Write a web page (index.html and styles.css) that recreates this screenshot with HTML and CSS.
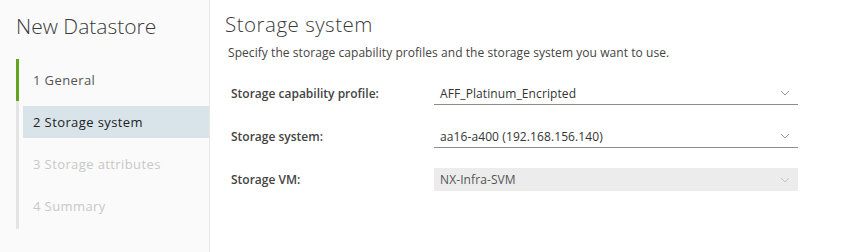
FILE: index.html
```html
<!DOCTYPE html>
<html lang="en">
<head>
  <meta charset="UTF-8" />
  <title>New Datastore</title>
  <link rel="stylesheet" href="styles.css">
</head>
<body>
  <div class="wizard">
    <div class="sidebar">
      <h1>New Datastore</h1>
      <div class="steps">
        <div class="step done">1 General</div>
        <div class="step current">2 Storage system</div>
        <div class="step">3 Storage attributes</div>
        <div class="step">4 Summary</div>
      </div>
    </div>

    <div class="content">
      <h2>Storage system</h2>
      <p class="desc">Specify the storage capability profiles and the storage system you want to use.</p>

      <div class="form">
        <div class="row">
          <label>Storage capability profile:</label>
          <div class="select">
            <span>AFF_Platinum_Encripted</span>
            <svg class="chev" width="10" height="6" viewBox="0 0 10 6"><path d="M1 1 L5 5 L9 1" fill="none" stroke="#9a9a9a" stroke-width="1"/></svg>
          </div>
        </div>
        <div class="row">
          <label>Storage system:</label>
          <div class="select">
            <span>aa16-a400 (192.168.156.140)</span>
            <svg class="chev" width="10" height="6" viewBox="0 0 10 6"><path d="M1 1 L5 5 L9 1" fill="none" stroke="#9a9a9a" stroke-width="1"/></svg>
          </div>
        </div>
        <div class="row">
          <label>Storage VM:</label>
          <div class="select disabled">
            <span>NX-Infra-SVM</span>
            <svg class="chev" width="10" height="6" viewBox="0 0 10 6"><path d="M1 1 L5 5 L9 1" fill="none" stroke="#c4c4c4" stroke-width="1"/></svg>
          </div>
        </div>
      </div>
    </div>
  </div>
</body>
</html>
```

FILE: styles.css
```css
body {
  margin: 0;
  font-family: "Open Sans", sans-serif;
  color: #333;
  background: #fff;
}
.wizard {
  display: flex;
  height: 252px;
}
.sidebar {
  width: 209px;
  background: #fafafa;
  border-right: 1px solid #e8e8e8;
}
.sidebar h1 {
  margin: 12px 0 0 16px;
  font-size: 21px;
  font-weight: 300;
  line-height: 28px;
  color: #3a3a3a;
}
.steps {
  margin: 19px 0 0 16px;
  padding-top: 5px;
  border-left: 3px solid #e4e4e4;
  height: 165px;
  position: relative;
}
.steps::before {
  content: "";
  position: absolute;
  left: -3px;
  top: 0;
  width: 3px;
  height: 42px;
  background: #62a420;
}
.step {
  height: 32px;
  line-height: 32px;
  margin: 0 0 10px 4px;
  padding-left: 10px;
  font-size: 13px;
  letter-spacing: 0.4px;
  color: #c8c8c8;
}
.step.done {
  color: #555;
}
.step.current {
  background: #d9e4ea;
  color: #222;
}
.content {
  flex: 1;
  padding-left: 15px;
}
.content h2 {
  margin: 10px 0 0 0;
  font-size: 20.5px;
  font-weight: 300;
  line-height: 28px;
  letter-spacing: 0.5px;
  color: #3a3a3a;
}
.desc {
  margin: 7px 0 0 3px;
  font-size: 12px;
  letter-spacing: 0.06px;
  line-height: 16px;
  color: #444;
}
.form {
  margin-top: 21px;
}
.row {
  display: flex;
  align-items: center;
  height: 23px;
  margin-bottom: 20px;
}
.row label {
  width: 203px;
  padding-left: 6px;
  font-size: 12px;
  font-weight: 600;
  color: #444;
}
.select {
  width: 364px;
  height: 23px;
  display: flex;
  align-items: center;
  justify-content: space-between;
  padding: 0 6px;
  box-sizing: border-box;
  border-bottom: 1px solid #8c8c8c;
  font-size: 12px;
  letter-spacing: 0.1px;
  color: #333;
}
.select.disabled {
  background: #ececec;
  border-bottom: none;
  color: #555;
}
.chev {
  margin-right: 2px;
}
```
